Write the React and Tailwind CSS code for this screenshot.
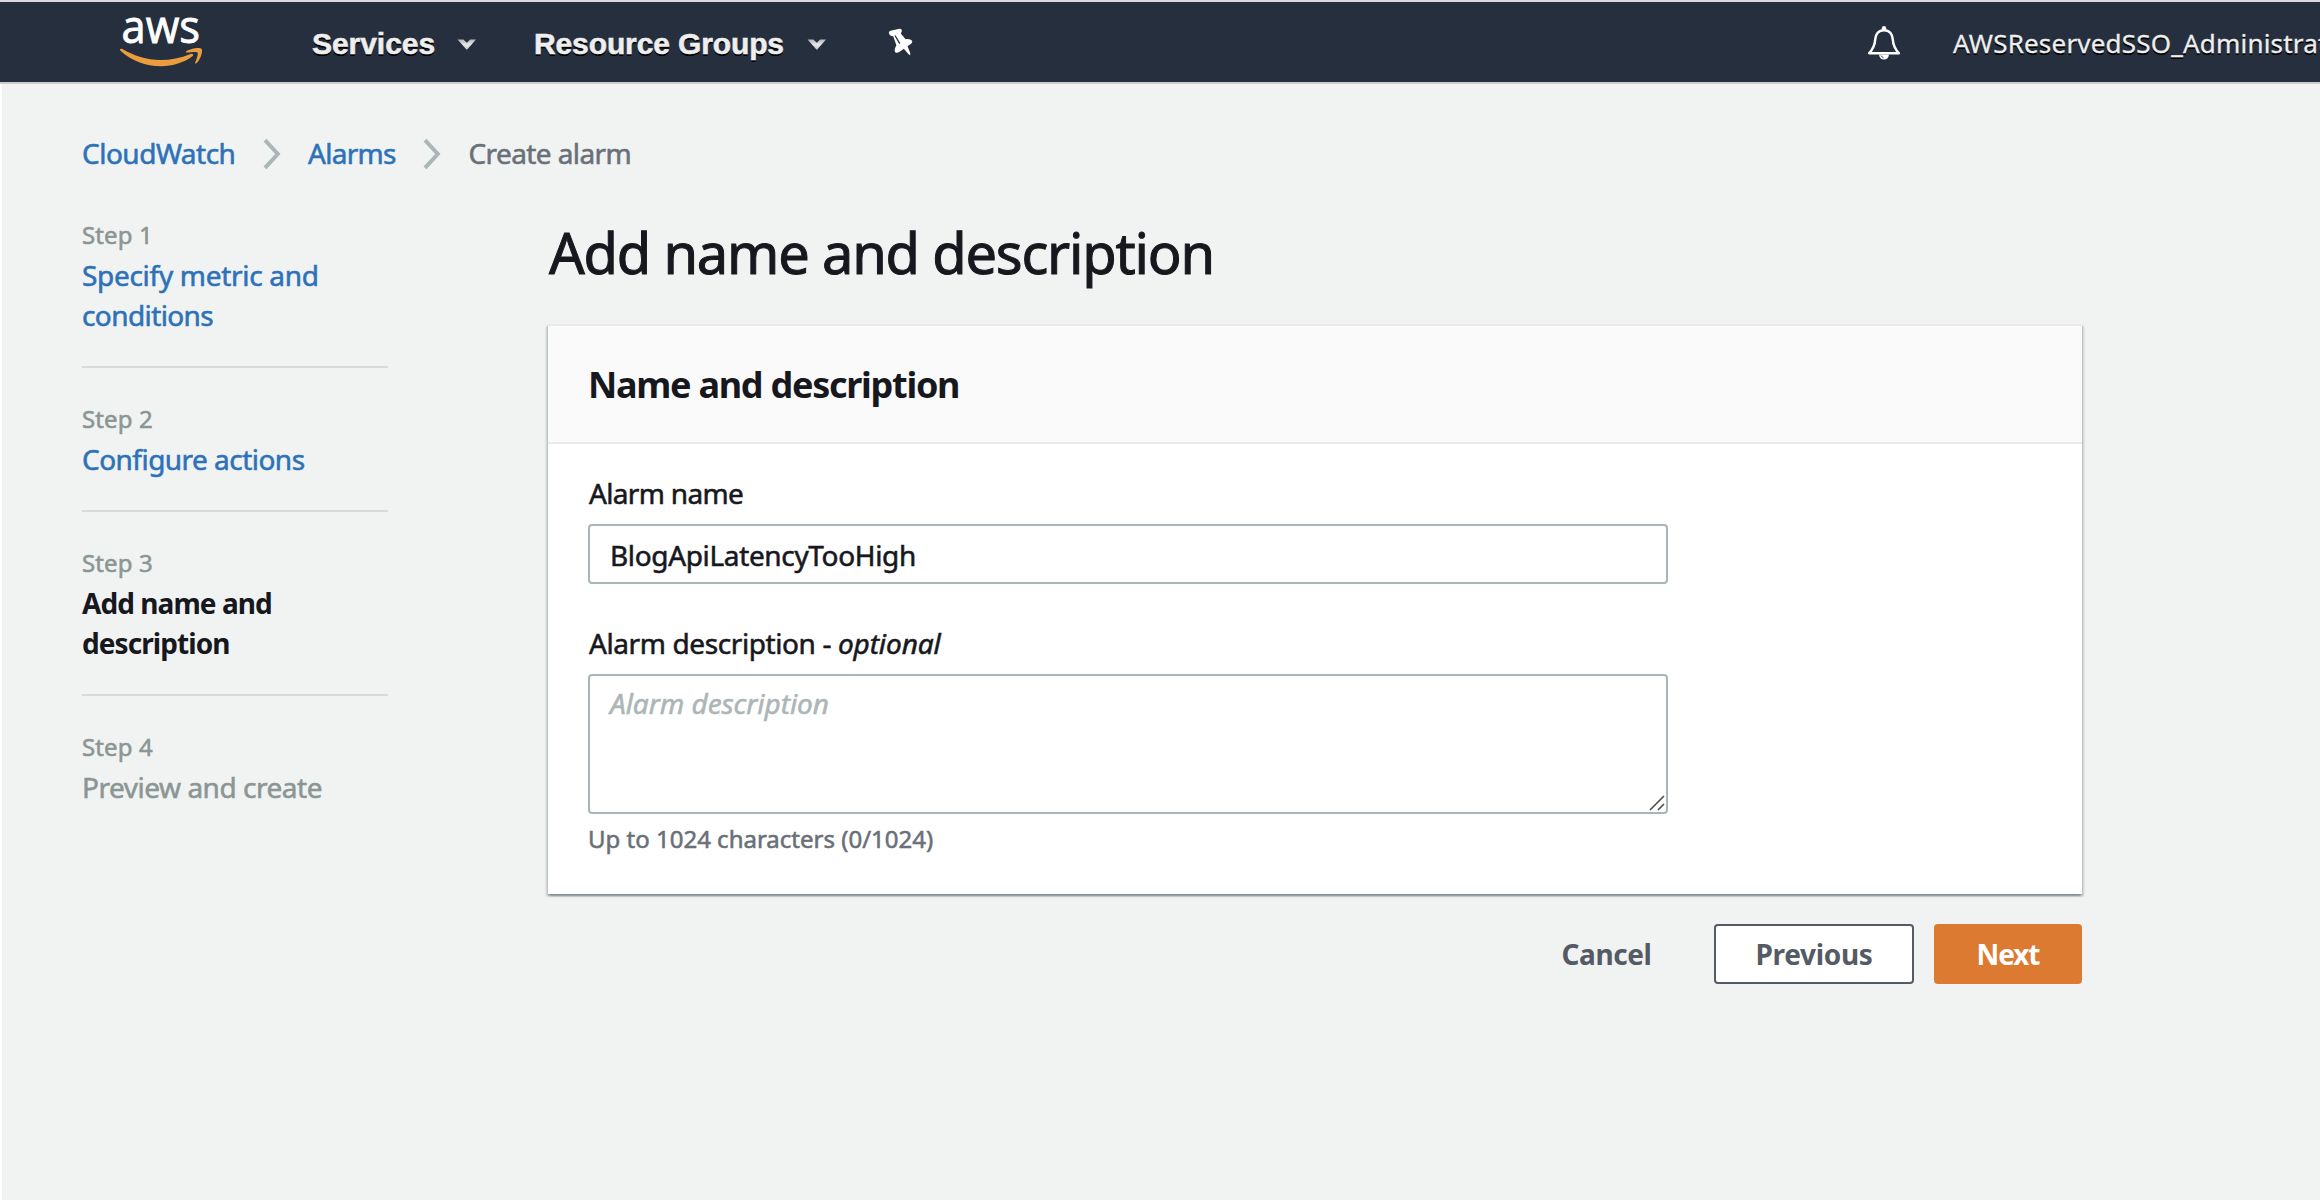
function Caret({ className }) {
  return (
    <svg className={className} width="20" height="12" viewBox="0 0 20 12">
      <defs>
        <linearGradient id="caret" x1="0" y1="0" x2="0" y2="1">
          <stop offset="0" stopColor="#b4b6b9" />
          <stop offset="0.5" stopColor="#e6e6e6" />
          <stop offset="1" stopColor="#c9cacb" />
        </linearGradient>
      </defs>
      <path d="M0.6 0.6H6.4L9.8 3.8L13.2 0.6H19L10.2 10.6H9.4Z" fill="url(#caret)" />
    </svg>
  );
}

function AwsLogo() {
  return (
    <svg className="ml-[118px] mt-[10px] h-[60px] w-[88px] overflow-visible" viewBox="0 0 88 60">
      <text
        x="3.500"
        y="32.500"
        textLength="78.5"
        lengthAdjust="spacingAndGlyphs"
        fontSize="46"
        fontWeight="500"
        fill="#fff"
        stroke="#fff"
        strokeWidth="0.9"
        className="font-['Open_Sans',sans-serif]"
      >
        aws
      </text>
      <path
        d="M2.1 39.2C2.5 38.4 3.4 38.5 4.4 39.1C16 46 28.500 50 42.500 50C52.500 50 62.500 48 72.500 44C74.600 43.100 76.200 44.900 74.400 46.300C66.500 52.500 54.500 56.200 43 56.200C27.500 56.200 13.500 50.600 2.700 40.900C2.100 40.300 1.800 39.800 2.100 39.200Z"
        fill="#eb9d3e"
      />
      <path
        d="M68.300 41.200C71.800 38.700 82 36.900 83.600 38.900C85.200 40.900 82.600 49.700 78.400 53.200C77.600 53.900 76.800 53.500 77.200 52.600C78.500 49.500 80.600 44 79.500 42.600C78.400 41.400 72.600 42.200 69.300 42.600C68.200 42.700 67.500 41.900 68.300 41.200Z"
        fill="#eb9d3e"
      />
    </svg>
  );
}

function Pin() {
  return (
    <svg className="ml-[60px] mt-[26px] h-[32px] w-[30px]" viewBox="0 0 30 32">
      <path
        d="M2.500 8.500C1.400 6.800 1.800 5.400 3.600 4.800L12.400 2.800C14 2.500 15.200 3.600 14.800 5.200L13.800 7.600L18.600 13.200C21.500 12.500 25 13.500 25.300 15.600C25.400 17.400 23 18.600 20.500 20.200L23.200 26.800V29.200L21.800 28.600L16.800 22.700C14 24.800 10.500 27.500 8.600 26.500C6.800 25 8 21.600 9.400 19.200L6.200 10.200C4.600 10.300 3.200 9.800 2.500 8.500Z"
        fill="#fff"
      />
      <path d="M8 9.500L12.800 17.600" stroke="#262f3e" strokeWidth="1.300" fill="none" />
    </svg>
  );
}

function Bell() {
  return (
    <svg className="mt-px h-[36px] w-[34px] shrink-0" viewBox="0 0 34 36">
      <circle cx="17" cy="3.200" r="2.200" fill="#fff" />
      <path
        d="M17 5.300C11.500 5.300 8.600 9.300 8.200 14.500C7.800 20.500 6.600 23.500 2.200 28.200H31.800C27.400 23.500 26.200 20.500 25.800 14.500C25.400 9.300 22.500 5.300 17 5.300Z"
        fill="none"
        stroke="#fff"
        strokeWidth="2.500"
        strokeLinejoin="round"
      />
      <path d="M12 29.500H22C21.800 32.500 19.800 34.500 17 34.500S12.200 32.500 12 29.500Z" fill="#fff" />
      <path d="M13.800 30.600L16.600 33" stroke="#262f3e" strokeWidth="0.900" />
    </svg>
  );
}

function Chevron({ className }) {
  return (
    <svg className={className} width="20" height="34" viewBox="0 0 20 34">
      <path d="M3 3.200L15.800 17L3 30.800" fill="none" stroke="#acb6b7" strokeWidth="4" />
    </svg>
  );
}

function Step({ label, last, children }) {
  return (
    <li className={last ? "" : "mb-[33px] border-b-2 border-[#d5dbda] pb-[31px]"}>
      <p className="mb-0.5 text-[24px] leading-9 tracking-[0.1px] text-[#8b9694]">{label}</p>
      {children}
    </li>
  );
}

export default function App() {
  return (
    <div className="flex h-[1200px] w-[2320px] flex-col overflow-hidden bg-[#f1f3f3] font-['Noto_Sans',sans-serif] text-[28px] leading-10 text-[#17181e] [-webkit-text-stroke:0.55px]">
      <header className="flex h-[84px] shrink-0 items-start border-t-2 border-b-2 border-t-[#d6dadf] border-b-[#cbcccc] bg-[#262f3e]">
        <div className="-mt-0.5 flex">
          <AwsLogo />
          <div className="ml-[106px] mt-[24px] flex w-[222px] items-start font-['Liberation_Sans',sans-serif] text-[30px] font-bold text-[#eee] [text-shadow:0_2px_0_#000]">
            <span className="w-[145px] tracking-[-0.05px]">Services</span>
            <Caret className="mt-[15px]" />
          </div>
          <div className="mt-[24px] flex items-start font-['Liberation_Sans',sans-serif] text-[30px] font-bold text-[#eee] [text-shadow:0_2px_0_#000]">
            <span className="w-[273px] whitespace-nowrap tracking-[-0.12px]">Resource Groups</span>
            <Caret className="mt-[15px]" />
          </div>
          <Pin />
        </div>
        <div className="ml-auto mt-[22px] flex h-10 w-[453px] shrink-0">
          <Bell />
          <span className="-mt-px ml-[52px] whitespace-nowrap text-[26px] tracking-[0.2px] text-[#eee] [-webkit-text-stroke:0.3px] [text-shadow:0_2px_0_#000]">
            AWSReservedSSO_Administrat
          </span>
        </div>
      </header>

      <div className="flex-1 border-l-2 border-white pl-20">
        <nav className="flex pt-[49px] whitespace-nowrap">
          <a className="w-[180px] tracking-[-0.5px] text-[#2d72b8]">CloudWatch</a>
          <Chevron className="mt-[4px]" />
          <a className="ml-[26px] w-[114px] tracking-[-0.7px] text-[#2d72b8]">Alarms</a>
          <Chevron className="mt-[4px]" />
          <span className="ml-[26.500px] tracking-[-0.6px] text-[#6a7078]">Create alarm</span>
        </nav>

        <div className="mt-[44px] flex">
          <ol className="w-[306px] shrink-0">
            <Step label="Step 1">
              <a className="block text-[#2d72b8]">
                <span className="tracking-[-0.3px]">Specify metric and</span>
                <br />
                <span className="tracking-[-0.6px]">conditions</span>
              </a>
            </Step>
            <Step label="Step 2">
              <a className="block tracking-[-0.53px] text-[#2d72b8]">Configure actions</a>
            </Step>
            <Step label="Step 3">
              <p className="font-bold tracking-[-0.93px] [-webkit-text-stroke:0]">
                Add name and
                <br />
                description
              </p>
            </Step>
            <Step label="Step 4" last>
              <p className="tracking-[-0.47px] text-[#8b9694]">Preview and create</p>
            </Step>
          </ol>

          <main className="ml-[160px] w-[1534px]">
            <h1 className="pl-px text-[56px] leading-[70px] tracking-[-1.2px] [-webkit-text-stroke:1px]">
              Add name and description
            </h1>

            <section className="mt-[37px] h-[570px] border-t-2 border-[#eaecec] bg-white shadow-[0_2px_2px_0_rgba(0,28,36,0.3),2px_2px_2px_0_rgba(0,28,36,0.15),-2px_2px_2px_0_rgba(0,28,36,0.15)]">
              <div className="h-[118px] border-b-2 border-[#eaecec] bg-[#fafafa] pl-10 pt-[37px]">
                <h2 className="text-[36px] font-bold leading-[44px] tracking-[-1.27px] [-webkit-text-stroke:0]">
                  Name and description
                </h2>
              </div>
              <div className="px-10 pt-[29px]">
                <label className="block pl-px tracking-[-0.67px]">Alarm name</label>
                <input
                  className="mt-[11px] block h-[60px] w-[1080px] rounded-[4px] border-2 border-[#a9b5b6] bg-white px-5 pt-[2px] tracking-[-0.35px] outline-none"
                  defaultValue="BlogApiLatencyTooHigh"
                />
                <label className="mt-[39px] block pl-px tracking-[-0.4px]">
                  Alarm description - <em className="tracking-[-0.1px]">optional</em>
                </label>
                <div className="relative mt-[11px] h-[140px] w-[1080px]">
                  <textarea
                    className="block size-full resize-none rounded-[4px] border-2 border-[#a9b5b6] bg-white px-5 pt-[7px] outline-none placeholder:tracking-[-0.05px] placeholder:text-[#acb6b7] placeholder:italic placeholder:opacity-100"
                    placeholder="Alarm description"
                  />
                  <svg className="absolute bottom-[3px] right-[3px]" width="16" height="16" viewBox="0 0 16 16">
                    <path d="M1 15L15 1M9 15L15 9" stroke="#4c4c4c" strokeWidth="1.600" />
                  </svg>
                </div>
                <p className="mt-[7px] text-[24px] leading-9 text-[#6a7078]">Up to 1024 characters (0/1024)</p>
              </div>
            </section>

            <div className="mt-[30px] flex justify-end font-bold text-[#545b64] [-webkit-text-stroke:0]">
              <button className="h-[60px] w-[173px] pb-px tracking-[-0.4px]">Cancel</button>
              <button className="ml-[21px] h-[60px] w-[200px] rounded-[4px] border-2 border-[#545b64] bg-white pb-px tracking-[-0.3px]">
                Previous
              </button>
              <button className="ml-5 h-[60px] w-[148px] rounded-[4px] bg-[#dd7a32] pb-px tracking-[-1.1px] text-white">
                Next
              </button>
            </div>
          </main>
        </div>
      </div>
    </div>
  );
}
